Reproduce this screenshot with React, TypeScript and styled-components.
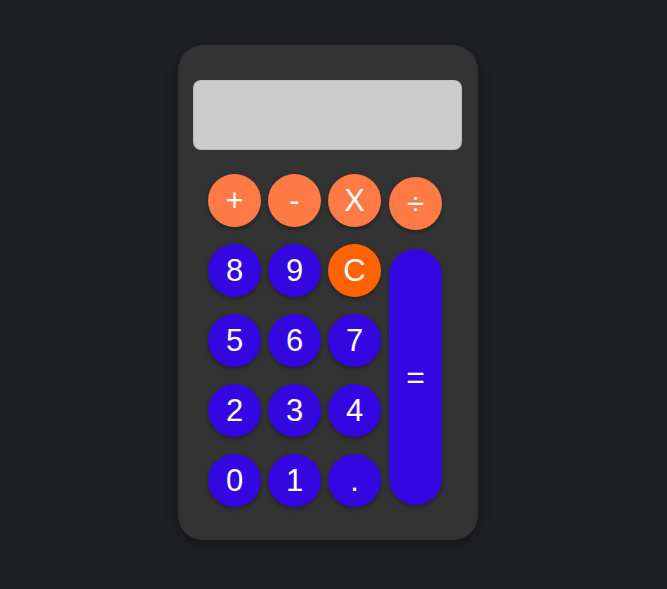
import React from "react";
import styled, { createGlobalStyle } from "styled-components";

const Global = createGlobalStyle`
  html, body { margin: 0; padding: 0; background: #1f2023; }
  body { width: 667px; height: 589px; font-family: "Liberation Sans", Arial, sans-serif; }
`;

const Page = styled.div`
  width: 667px;
  height: 589px;
  display: flex;
  justify-content: flex-start;
  align-items: flex-start;
  padding: 45px 0 0 178px;
  box-sizing: border-box;
  background: #1f2023;
`;

const Body = styled.div`
  width: 300px;
  height: 495px;
  box-sizing: border-box;
  background: #333333;
  border-radius: 25px;
  padding: 35px 16px 0 15px;
  display: flex;
  flex-direction: column;
  box-shadow: 0 4px 14px rgba(0, 0, 0, 0.35);
`;

const Display = styled.div`
  height: 70px;
  background: #cccccc;
  border-radius: 8px;
  box-shadow: inset 0 0 2px rgba(0, 0, 0, 0.25);
  margin-bottom: 24px;
`;

const Keypad = styled.div`
  display: grid;
  grid-template-columns: repeat(3, 53px) 54px;
  grid-template-rows: repeat(5, 53px);
  column-gap: 7px;
  row-gap: 17px;
  padding-left: 15px;
`;

type Kind = "op" | "num" | "clear";

const colors: Record<Kind, string> = {
  op: "#ff7a45",
  num: "#3407e0",
  clear: "#ff6200",
};

const Key = styled.button<{ $kind: Kind; $shift?: boolean }>`
  width: 53px;
  height: 53px;
  border: none;
  border-radius: 50%;
  padding: 0;
  background: ${(p) => colors[p.$kind]};
  color: #ffffff;
  font-family: "Liberation Sans", Arial, sans-serif;
  font-size: 31px;
  line-height: 1;
  display: flex;
  align-items: center;
  justify-content: center;
  box-shadow: 0 2px 4px rgba(0, 0, 0, 0.35);
  margin-top: ${(p) => (p.$shift ? "3px" : "0")};
  margin-left: ${(p) => (p.$shift ? "1px" : "0")};
  cursor: pointer;
`;

const Equals = styled.button`
  grid-column: 4;
  grid-row: 2 / span 4;
  align-self: center;
  width: 53px;
  height: 256px;
  margin-top: 3px;
  margin-left: 1px;
  border: none;
  border-radius: 27px;
  background: #3407e0;
  color: #ffffff;
  font-family: "Liberation Sans", Arial, sans-serif;
  font-size: 32px;
  box-shadow: 0 2px 4px rgba(0, 0, 0, 0.35);
  cursor: pointer;
`;

const rows: { label: string; kind: Kind }[][] = [
  [
    { label: "8", kind: "num" },
    { label: "9", kind: "num" },
    { label: "C", kind: "clear" },
  ],
  [
    { label: "5", kind: "num" },
    { label: "6", kind: "num" },
    { label: "7", kind: "num" },
  ],
  [
    { label: "2", kind: "num" },
    { label: "3", kind: "num" },
    { label: "4", kind: "num" },
  ],
  [
    { label: "0", kind: "num" },
    { label: "1", kind: "num" },
    { label: ".", kind: "num" },
  ],
];

export default function App() {
  return (
    <>
      <Global />
      <Page>
        <Body>
          <Display />
          <Keypad>
            <Key $kind="op">+</Key>
            <Key $kind="op">-</Key>
            <Key $kind="op">X</Key>
            <Key $kind="op" $shift>÷</Key>
            {rows.map((r, i) =>
              r.map((k, j) => (
                <Key
                  key={k.label}
                  $kind={k.kind}
                  style={{ gridRow: i + 2, gridColumn: j + 1 }}
                >
                  {k.label}
                </Key>
              ))
            )}
            <Equals>=</Equals>
          </Keypad>
        </Body>
      </Page>
    </>
  );
}
